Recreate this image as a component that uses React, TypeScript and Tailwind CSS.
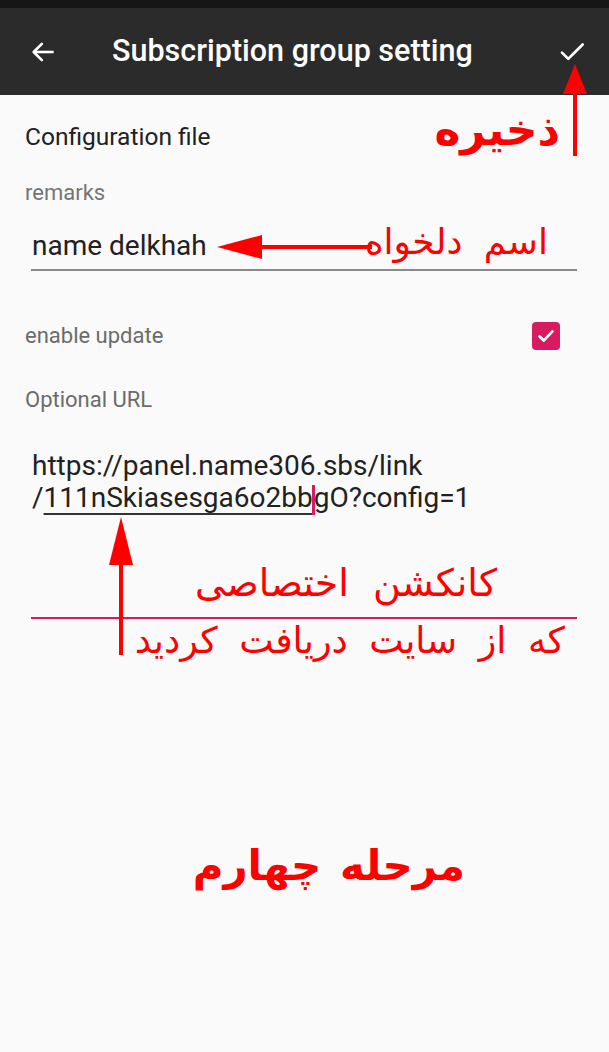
import React from "react";

const fa = { fontFamily: '"DejaVu Sans", "Noto Sans", sans-serif' };

export default function App() {
  return (
    <div className="relative w-[609px] h-[1052px] bg-[#fafafa] overflow-hidden" style={{ fontFamily: 'Roboto, "Noto Sans", sans-serif' }}>
      <div className="h-2 bg-[#161616]" />
      <div className="h-[87px] bg-[#2b2b2b] flex items-center text-white">
        <div className="w-[112px] flex pl-[29px]">
          <svg width="28" height="28" viewBox="0 0 24 24" fill="none" stroke="white" strokeWidth="2.2" strokeLinecap="square">
            <path d="M20 12H5" />
            <path d="M11 5l-7 7 7 7" strokeLinecap="round" strokeLinejoin="round" />
          </svg>
        </div>
        <div className="flex-1 text-[30.5px] font-medium leading-none">Subscription group setting</div>
        <div className="pr-[22px]">
          <svg width="30" height="30" viewBox="0 0 24 24" fill="none" stroke="white" strokeWidth="2.2" strokeLinecap="round" strokeLinejoin="round">
            <path d="M4 12.5l5 5L20.5 6" />
          </svg>
        </div>
      </div>

      <div className="px-[25px]">
        <div className="pt-[27px] text-[24.5px] leading-[30px] text-[#212121]">Configuration file</div>
        <div className="mt-[27px] text-[22px] leading-[28px] text-[#757575]">remarks</div>
        <div className="mt-[23px] ml-[6px] mr-[7px] pl-[1px] pb-[7px] border-b-2 border-[#8a8a8a] text-[28px] leading-[32px] text-[#212121]">
          name delkhah
        </div>
        <div className="mt-[51px] flex items-center justify-between pr-[24px]">
          <span className="text-[22px] leading-[28px] text-[#6b6b6b]">enable update</span>
          <span className="w-[28px] h-[28px] rounded-[4px] bg-[#d81b60] flex items-center justify-center">
            <svg width="22" height="22" viewBox="0 0 24 24" fill="none" stroke="white" strokeWidth="3" strokeLinecap="round" strokeLinejoin="round">
              <path d="M5 12.5l4.5 4.5L19 7" />
            </svg>
          </span>
        </div>
        <div className="mt-[36px] text-[22px] leading-[28px] text-[#6b6b6b]">Optional URL</div>
        <div className="mt-[36px] ml-[6px] mr-[7px] pl-[1px] pb-[102px] border-b-2 border-[#d81b60] text-[28px] leading-[32px] text-[#212121]">
          <div>https://panel.name306.sbs/link</div>
          <div>
            /<span className="underline decoration-[#333] underline-offset-[6px]">111nSkiasesga6o2bb</span>
            <span className="inline-block w-[3px] h-[30px] bg-[#d81b60] align-middle -mx-[1px]" />
            gO?config=1
          </div>
        </div>
      </div>

      {/* annotations */}
      <svg className="absolute left-[560px] top-[62px]" width="30" height="96" viewBox="0 0 30 96">
        <polygon points="15,2 3,32 27,32" fill="#ff0000" />
        <rect x="13" y="30" width="4" height="64" fill="#ff0000" />
      </svg>
      <div dir="rtl" className="absolute right-[49px] top-[102px] text-[44px] font-bold text-[#ff0000] leading-[56px] whitespace-nowrap" style={fa}>
        ذخیره
      </div>

      <svg className="absolute left-[214px] top-[232px]" width="160" height="30" viewBox="0 0 160 30">
        <polygon points="3,15 48,3 48,27" fill="#ff0000" />
        <rect x="46" y="13" width="112" height="4" fill="#ff0000" />
      </svg>
      <div dir="rtl" className="absolute right-[61px] top-[214px] text-[36px] text-[#ff0000] leading-[56px] whitespace-nowrap [word-spacing:10px]" style={fa}>
        اسم دلخواه
      </div>

      <svg className="absolute left-[106px] top-[515px]" width="30" height="142" viewBox="0 0 30 142">
        <polygon points="15,2 3,50 27,50" fill="#ff0000" />
        <rect x="13" y="48" width="4" height="92" fill="#ff0000" />
      </svg>
      <div dir="rtl" className="absolute right-[112px] top-[556px] text-[38px] text-[#ff0000] leading-[54px] whitespace-nowrap [word-spacing:12px]" style={fa}>
        کانکشن اختصاصی
      </div>
      <div dir="rtl" className="absolute right-[44px] top-[614px] text-[36.5px] text-[#ff0000] leading-[54px] whitespace-nowrap [word-spacing:10px]" style={fa}>
        که از سایت دریافت کردید
      </div>
      <div dir="rtl" className="absolute right-[144px] top-[836px] text-[42px] font-bold text-[#ff0000] leading-[60px] whitespace-nowrap [word-spacing:4px]" style={fa}>
        مرحله چهارم
      </div>
    </div>
  );
}
